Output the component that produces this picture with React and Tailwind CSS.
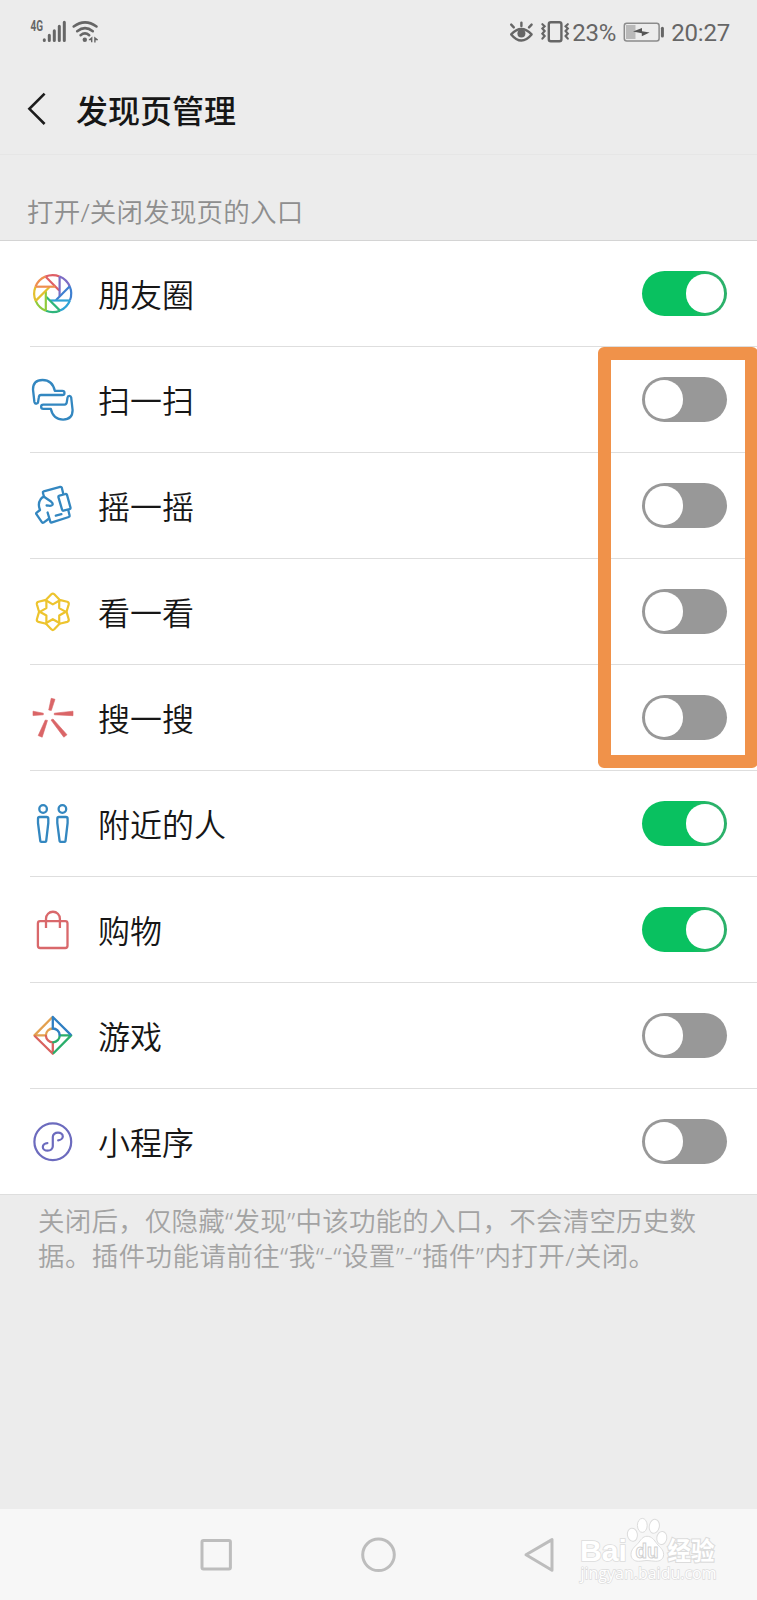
import { useState } from "react";

const MOMENTS_COLORS = ["#df5f66", "#7d6cc4", "#3f7fd0", "#2fa3d6", "#2fb57c", "#8fcb3c", "#e3c02f", "#ef8f4f"];

const MomentsIcon = () => (
    <svg width="48" height="48" viewBox="0 0 48 48" fill="none" strokeWidth="2.2">
        <g transform="translate(23.7 24.6)">
            {MOMENTS_COLORS.map((color, i) => (
                <g key={color} stroke={color} transform={`rotate(${i * 45 - 45})`}>
                    <path d="M6.9 -17.2A18.5 18.5 0 0 1 17 -7.3" />
                    <path d="M6.9 -17.2V2.4" />
                </g>
            ))}
        </g>
    </svg>
);

const ScanIcon = () => {
    const hand = "M12 20H33.3C36.2 20 36.2 15.8 33.3 15.8H25.8C24.2 8.5 19.6 5 13.5 5C7 5 4 8.8 4 14.5L5.4 27C5.9 29.4 8.8 29.2 9.1 27L9.8 22.4C10 20.8 10.8 20 12 20Z";
    return (
        <svg width="48" height="48" viewBox="0 0 48 48" fill="none" stroke="#3387c0" strokeWidth="2.3" strokeLinejoin="round">
            <path d={hand} />
            <path d={hand} transform="rotate(180 23.8 24.8)" />
        </svg>
    );
};

const ShakeIcon = () => (
    <svg width="48" height="48" viewBox="0 0 48 48" fill="none" stroke="#3387c0" strokeWidth="2.3" strokeLinejoin="round" strokeLinecap="round">
        <path d="M15 15.7L13.9 11.8Q13.6 10.7 14.7 10.4L31.2 5.9Q32.4 5.6 32.8 6.7L34.2 12.6" />
        <path d="M30.4 14.6L36.6 13Q37.7 12.8 38 13.9L41.5 26.6Q41.7 27.8 40.6 28.1L34.4 29.7Q33.4 29.9 33.1 28.8L29.4 16.1Q29.2 14.9 30.4 14.6Z" />
        <path d="M39.3 29.2L40.6 34.5Q40.9 35.7 39.8 36L23 41.4Q21.6 41.8 21.3 40.6L18.6 31.5" />
        <path d="M19.5 38L14.6 41.6Q13.7 42.2 13 41.3L7.4 33.2Q6.8 32.3 7.7 31.6L11 29C9.6 25.5 9.6 21.2 11.4 18.6Q12.6 16.6 15 15.7L22.3 20.8Q24.3 22.4 23.4 23.9C22 25.8 19.6 24.4 17.6 24.5" />
        <path d="M26.8 34.6L32.4 33.2" />
    </svg>
);

const LookIcon = () => (
    <svg width="48" height="48" viewBox="0 0 48 48" fill="none" stroke="#edc42e" strokeWidth="2.2" strokeLinejoin="round">
        <g transform="translate(23.8 24.8)">
            {[0, 60, 120, 180, 240, 300].map((deg) => (
                <path
                    key={deg}
                    d="M0 -7.4L-6.2 -11Q-7 -11.6 -6.3 -12.5L-1.5 -17.5Q0 -18.9 1.5 -17.5L6.3 -12.5Q7 -11.6 6.2 -11Z"
                    transform={`rotate(${deg})`}
                />
            ))}
        </g>
    </svg>
);

const SearchIcon = () => (
    <svg width="48" height="48" viewBox="0 0 48 48" fill="#da6567" stroke="#da6567" strokeWidth="0.6" strokeLinejoin="round">
        <path d="M22.2 5.3L26 6.3L22.3 17.5L19.7 17Z" />
        <path d="M4 18.2L14.3 20.2V21.8L4 22.6Z" />
        <path d="M25.3 20.2L44 18.2V22.7L25.3 21.8Z" />
        <path d="M16.3 27L18.5 27.4L13.2 44.2L9.2 42.6Z" />
        <path d="M22 27L24 26L38 41.7L34.8 44.2Z" />
    </svg>
);

const NearbyIcon = () => (
    <svg width="48" height="48" viewBox="0 0 48 48" fill="none" stroke="#3387c0" strokeWidth="2.3" strokeLinejoin="round">
        {[0, 19.3].map((x) => (
            <g key={x} transform={`translate(${x} 0)`}>
                <circle cx="14.1" cy="10" r="3.8" />
                <path d="M10.6 18H17.6Q19.3 18 19.3 19.7V24L17.2 42Q17.1 42.8 16.3 42.8H12.2Q11.4 42.8 11.3 42L9 24V19.7Q9 18 10.6 18Z" />
            </g>
        ))}
    </svg>
);

const ShoppingIcon = () => (
    <svg width="48" height="48" viewBox="0 0 48 48" fill="none" stroke="#d9686b" strokeWidth="2.3">
        <rect x="8.9" y="16.2" width="29.6" height="26.8" rx="2.2" />
        <path d="M17 23V13.7A6.9 6.9 0 0 1 30.9 13.7V23" />
    </svg>
);

const GamesIcon = () => (
    <svg width="48" height="48" viewBox="0 0 48 48" fill="none" strokeWidth="2.3" strokeLinecap="round">
        <g transform="translate(23.8 24.4)">
            <path stroke="#e3a04e" d="M-18.4 0L-1 -17.6M-18.4 0H-6.9A6.9 6.9 0 0 1 0 -6.9" />
            <path stroke="#d9625f" d="M0 18.4L-17.8 0.8M0 18.4V6.9A6.9 6.9 0 0 1 -6.9 0.4" />
            <path stroke="#2aae6b" d="M18.4 0L0.9 17.6M18.4 0H6.9A6.9 6.9 0 0 1 0.4 6.9" />
            <path stroke="#2f7fc2" d="M0 -18.4L17.8 -0.8M0 -18.4V-6.9A6.9 6.9 0 0 1 6.9 -0.4" />
        </g>
    </svg>
);

const MiniProgramIcon = () => (
    <svg width="48" height="48" viewBox="0 0 48 48" fill="none" stroke="#6c6bbe" strokeWidth="2.2" strokeLinecap="round">
        <g transform="translate(23.8 24.7)">
            <circle r="18.4" />
            <path d="M5.4 -1.4C8 -1.6 10 -3.3 10 -5.3C10 -7.6 7.8 -9 5.2 -9C2.2 -9 0 -7.2 0 -4.6V4.6C0 7.2 -2.2 9 -5.2 9C-7.8 9 -10 7.6 -10 5.3C-10 3.3 -8 1.6 -5.4 1.4" />
        </g>
    </svg>
);

const ENTRIES = [
    { id: "moments", label: "朋友圈", icon: MomentsIcon, enabled: true },
    { id: "scan", label: "扫一扫", icon: ScanIcon, enabled: false },
    { id: "shake", label: "摇一摇", icon: ShakeIcon, enabled: false },
    { id: "look", label: "看一看", icon: LookIcon, enabled: false },
    { id: "search", label: "搜一搜", icon: SearchIcon, enabled: false },
    { id: "nearby", label: "附近的人", icon: NearbyIcon, enabled: true },
    { id: "shopping", label: "购物", icon: ShoppingIcon, enabled: true },
    { id: "games", label: "游戏", icon: GamesIcon, enabled: false },
    { id: "mini", label: "小程序", icon: MiniProgramIcon, enabled: false },
];

const Toggle = ({ on, onClick }) => (
    <button
        role="switch"
        aria-checked={on}
        onClick={onClick}
        className={`flex h-[45px] w-[85px] items-center rounded-full px-[3px] ${on ? "justify-end bg-linear-to-r from-[#09c160] from-60% to-[#2bb16a] to-85%" : "justify-start bg-[#989898]"}`}
    >
        <span className="h-[39px] w-[38px] rounded-full bg-white" />
    </button>
);

const StatusBar = () => (
    <div className="flex h-16 items-center justify-between pl-[29px] pr-[27px] text-[#666]">
        <svg width="72" height="64" viewBox="29 0 72 64" fill="none" stroke="#666" strokeLinecap="round">
            <text x="30.5" y="31" textLength="12.5" lengthAdjust="spacingAndGlyphs" fill="#666" stroke="none" className="font-['Roboto'] text-[14px] font-bold">4G</text>
            <path strokeWidth="3" d="M44.3 39.8V40.6M49.3 35.3V40.6M54.3 30.8V40.6M59.3 26.2V40.6M64.3 22.3V40.6" />
            <path strokeWidth="2.6" d="M73.7 26.5Q85 18.2 96.5 26.5M77.2 31.2Q85 25.2 92.8 31.2M80.6 35.2Q85 31.6 89.2 35.2" />
            <circle cx="84.8" cy="39.7" r="2.2" fill="#666" stroke="none" />
            <path fill="#666" stroke="none" d="M88.8 39.4L92.4 36.6V42.2H91V40.2H88.8ZM98 39.4L94.2 36.6V42.4H95.6V40.2H98Z" />
        </svg>
        <div className="flex items-center">
            <svg width="63" height="64" viewBox="509 0 63 64" fill="none" stroke="#666" strokeWidth="2.4" strokeLinecap="round">
                <path d="M511.2 34.4Q521.3 23.6 531.6 34.4Q521.3 46.6 511.2 34.4Z" strokeLinejoin="round" />
                <circle cx="521.4" cy="33.6" r="4" fill="#666" stroke="none" />
                <path d="M521.4 22.6V26M511.2 24.6L513.8 27.4M531.6 24.6L529 27.4" />
                <rect x="548.8" y="22.2" width="12.6" height="19" rx="2" />
                <path strokeWidth="2.2" d="M542.4 24.2L544.6 26.2L542.4 28.6L544.6 31L542.4 33.6L544.6 36L542.4 38.6M567.8 24.2L565.6 26.2L567.8 28.6L565.6 31L567.8 33.6L565.6 36L567.8 38.6" />
            </svg>
            <span className="pt-px font-['Roboto'] text-2xl leading-none tracking-[-0.2px]">23%</span>
            <svg className="ml-[7px] mr-[6px]" width="42" height="64" viewBox="623 0 42 64">
                <rect x="624.3" y="23.3" width="34.8" height="17.6" rx="2.5" fill="none" stroke="#8b8b8b" strokeWidth="1.5" />
                <rect x="626" y="25" width="9.5" height="14" fill="#b9b9b9" />
                <path d="M633 31.6L642 28V31.3L649.6 32.6L641.8 36.3V33.2Z" fill="#555" />
                <path d="M662.4 28.2V36" stroke="#666" strokeWidth="3" strokeLinecap="round" />
            </svg>
            <span className="pt-px font-['Roboto'] text-2xl leading-none tracking-[-0.2px]">20:27</span>
        </div>
    </div>
);

const Watermark = () => (
    <svg className="absolute right-[37px] top-[6px]" width="144" height="76" viewBox="576 1515 144 76" fill="#fff" stroke="#dcdcdc" strokeWidth="1">
        <text x="580" y="1560.5" textLength="47" lengthAdjust="spacingAndGlyphs" fontSize="30" strokeWidth="1.6" paintOrder="stroke" className="font-['Liberation_Sans',sans-serif] font-bold">Bai</text>
        <text x="667.5" y="1559.5" textLength="47" lengthAdjust="spacingAndGlyphs" fontSize="25" strokeWidth="2.2" paintOrder="stroke" className="font-['Noto_Sans_CJK_SC',sans-serif] font-bold">经验</text>
        <ellipse cx="632.4" cy="1534.7" rx="5" ry="6.6" transform="rotate(-10 632.4 1534.7)" />
        <ellipse cx="642.3" cy="1525.4" rx="4.9" ry="7" />
        <ellipse cx="654.3" cy="1526.3" rx="5" ry="7" transform="rotate(12 654.3 1526.3)" />
        <ellipse cx="661.8" cy="1538" rx="5" ry="6.6" transform="rotate(8 661.8 1538)" />
        <path d="M647 1536.3C642.5 1536.3 641 1540 638 1543.3C634.5 1547 631 1549.5 631 1554.5C631 1558.8 634.3 1561.3 638.5 1561.3C642 1561.3 644 1560.5 647 1560.5C650 1560.5 652.5 1561.3 655.8 1561.3C660.5 1561.3 663.6 1558.8 663.6 1554.5C663.6 1549.5 660 1547.5 657 1543.8C654 1540 652 1536.3 647 1536.3Z" />
        <text x="635.5" y="1557.5" textLength="23" lengthAdjust="spacingAndGlyphs" fontSize="20" stroke="#d0d0d0" className="font-['Liberation_Sans'] font-bold">du</text>
        <text x="580.5" y="1579" textLength="136" lengthAdjust="spacingAndGlyphs" fontSize="16" strokeWidth="1.4" paintOrder="stroke" className="font-['Open_Sans',sans-serif]">jingyan.baidu.com</text>
    </svg>
);

const NavBar = () => (
    <div className="relative flex h-[91px] items-center bg-[#f7f7f7] pl-[198px]">
        <svg width="36" height="40" viewBox="0 0 36 40" fill="none" stroke="#bdbdbd" strokeWidth="3">
            <rect x="4" y="5.5" width="28.4" height="28.6" rx="1.5" />
        </svg>
        <svg className="ml-[126px]" width="38" height="40" viewBox="0 0 38 40" fill="none" stroke="#bdbdbd" strokeWidth="3">
            <circle cx="18.5" cy="19.8" r="15.8" />
        </svg>
        <svg className="ml-[123px]" width="38" height="40" viewBox="0 0 38 40" fill="none" stroke="#bdbdbd" strokeWidth="3" strokeLinejoin="round">
            <path d="M5 19.8L31 4.6V35.2Z" />
        </svg>
        <Watermark />
    </div>
);

export default function App() {
    const [entries, setEntries] = useState(ENTRIES);

    const toggleEntry = (id) => {
        setEntries((prev) => prev.map((e) => (e.id === id ? { ...e, enabled: !e.enabled } : e)));
    };

    return (
        <div className="flex h-[1600px] w-[757px] flex-col overflow-hidden bg-[#ececec] font-['Noto_Sans','Noto_Sans_CJK_SC',sans-serif]">
            <StatusBar />

            <header className="flex h-[91px] items-center border-b border-[#e6e6e6] pl-[26px]">
                <svg width="22" height="36" viewBox="0 0 22 36" fill="none" stroke="#1c1c1c" strokeWidth="2.6">
                    <path d="M18.6 2.6L3.4 17.8L18.6 33" />
                </svg>
                <h1 className="ml-7 pb-px font-['Noto_Sans_CJK_SC',sans-serif] text-[32px] font-medium leading-none text-[#161616]">发现页管理</h1>
            </header>

            <div className="flex h-[85px] items-end pb-[12px] pl-[27px]">
                <p className="text-[26.5px] font-[350] leading-[32px] tracking-[0.2px] text-[#8e8e8e]">打开/关闭发现页的入口</p>
            </div>

            <div className="relative border-b border-[#dedede] bg-white">
                {entries.map((entry, i) => (
                    <div
                        key={entry.id}
                        className={`flex h-[106px] items-center border-t pr-[30px] ${i === 0 ? "border-[#d4d4d4] pl-[30px]" : "ml-[30px] border-[#dedede]"}`}
                    >
                        <div className="-ml-px mb-px">
                            <entry.icon />
                        </div>
                        <span className="ml-[21px] flex-1 pb-[2px] font-['Noto_Sans_CJK_SC',sans-serif] text-[32px] font-[350] leading-none text-[#161616]">{entry.label}</span>
                        <Toggle on={entry.enabled} onClick={() => toggleEntry(entry.id)} />
                    </div>
                ))}
                {/* Highlight box around the switched-off entries */}
                <div className="pointer-events-none absolute -right-px top-[107px] h-[421px] w-[160px] rounded-md border-[13px] border-[#f0924a]" />
            </div>

            <p className="flex-1 whitespace-nowrap pl-[38px] pt-[9px] text-[26.5px] font-[350] leading-[35px] tracking-[0.22px] text-[#a3a3a3]">
                关闭后，仅隐藏“发现”中该功能的入口，不会清空历史数
                <br />
                <span className="tracking-[0.4px]">据。插件功能请前往“我“-“设置”-“插件”内打开/关闭。</span>
            </p>

            <NavBar />
        </div>
    );
}
